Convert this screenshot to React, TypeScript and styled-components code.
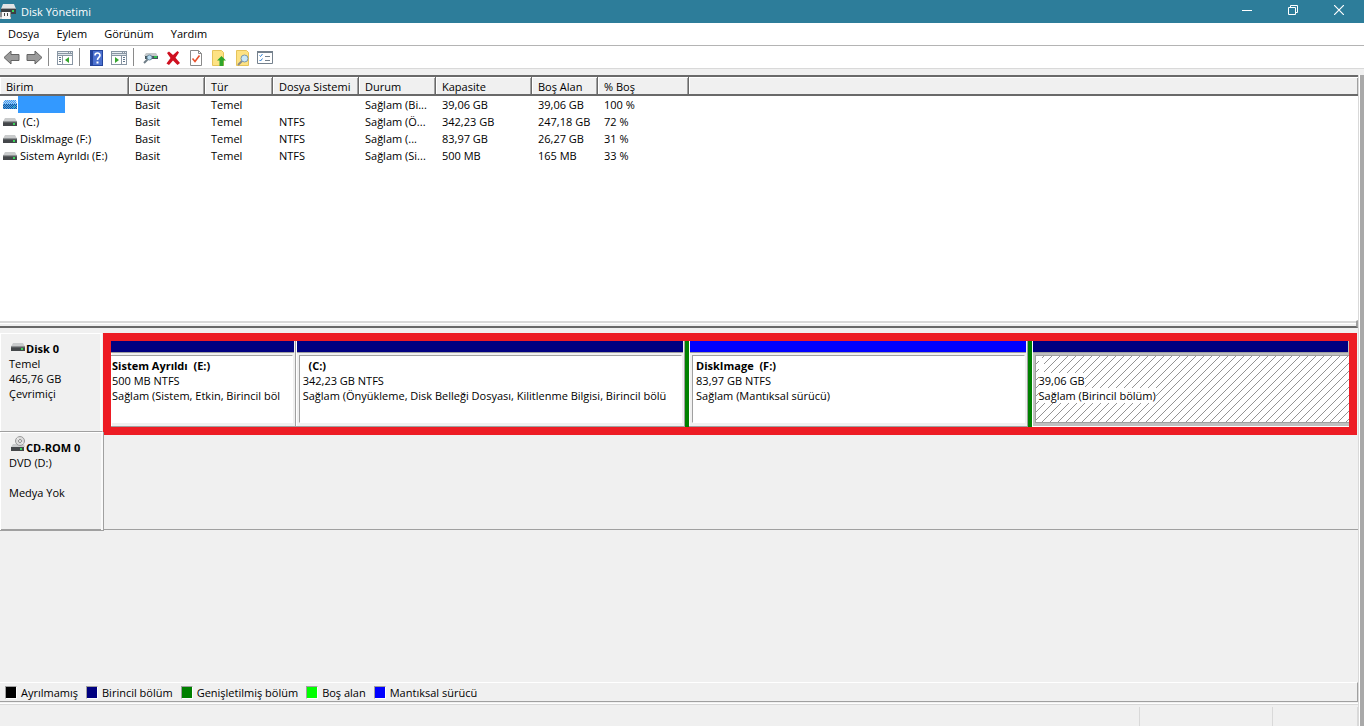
import React from "react";
import styled, { createGlobalStyle, css } from "styled-components";

const face = "#f0f0f0";
const shadow = "#a0a0a0";
const dark = "#696969";
const light = "#d9d9d9";

const colors = {
  unallocated: "#000000",
  primary: "#000080",
  extended: "#008000",
  free: "#00ff00",
  logical: "#0000ff",
};

const GlobalStyle = createGlobalStyle`
  * { box-sizing: border-box; }
  body {
    margin: 0;
    background: ${face};
    color: #000;
    font-family: "Open Sans", "Noto Sans", sans-serif;
    font-size: 11px;
    line-height: 15px;
  }
  button { font: inherit; color: inherit; background: none; border: 0; padding: 0; }
  svg { display: block; flex: none; }
`;

const Window = styled.div`
  display: flex;
  flex-direction: column;
  min-height: 100vh;
`;

const TitleBar = styled.header`
  display: flex;
  align-items: center;
  height: 23px;
  padding-right: 2px;
  background: #2d7d9a;
  color: #fff;
`;

const Title = styled.h1`
  flex: 1;
  margin: 0 0 0 5px;
  font-size: 11px;
  font-weight: 400;
`;

const CaptionButton = styled.button`
  display: flex;
  justify-content: center;
  align-items: center;
  width: 46px;
  height: 20px;
  align-self: flex-start;
`;

const MenuBar = styled.nav`
  display: flex;
  height: 23px;
  background: #fff;
  border-bottom: 1px solid #b4b4b4;
`;

const MenuItem = styled.button`
  padding: 0 9px 2px 8px;
`;

const ToolBar = styled.div`
  display: flex;
  align-items: center;
  height: 23px;
  background: #fff;
  border-bottom: 1px solid ${light};
`;

const ToolButton = styled.button`
  display: flex;
  justify-content: center;
  align-items: center;
  width: 23px;
  height: 22px;
  padding: 1px 1px 0 0;
`;

const ToolSeparator = styled.div`
  width: 1px;
  height: 18px;
  margin: 0 5px 0 2px;
  background: #8a8a8a;
`;

const Workspace = styled.div`
  flex: 1;
  display: flex;
  margin-top: 6px;
`;

const Panes = styled.main`
  flex: 1;
  min-width: 0;
  display: flex;
  flex-direction: column;
  border-right: 1px solid ${light};
`;

const EdgeStrip = styled.div`
  width: 5px;
  background: #a9a9a9;
  border-left: 1px solid #fff;
`;

const VolumePane = styled.section`
  height: 245px;
  background: #fff;
  border-top: 2px solid ${dark};
`;

const VolumeTable = styled.table`
  width: 100%;
  table-layout: fixed;
  border-collapse: separate;
  border-spacing: 0;

  th, td {
    padding: 0 6px;
    text-align: left;
    font-weight: 400;
    white-space: nowrap;
  }
  th {
    height: 19px;
    padding-top: 2px;
    background: ${face};
    border-right: 1px solid ${dark};
    border-bottom: 2px solid ${dark};
    box-shadow: inset 1px 1px 0 #fff, inset -1px 0 0 ${shadow};
  }
  th:last-child { border-right: 0; }
  td { height: 17px; line-height: 17px; }
  td:first-child { padding: 0 0 0 3px; }
`;

const Col = styled.col<{ $w?: number }>`
  ${(p) => p.$w && css`width: ${p.$w}px;`}
`;

const VolumeName = styled.div`
  display: flex;
  align-items: center;
  gap: 3px;
  white-space: pre;
`;

const SelectedName = styled.span`
  width: 47px;
  height: 17px;
  margin-left: -2px;
  background: #3399ff;
`;

const Splitter = styled.div`
  height: 8px;
  background: ${face};
  border-top: 1px solid #fff;
  border-right: 2px solid ${shadow};
  border-bottom: 2px solid ${dark};
  box-shadow: inset 0 2px 0 ${light}, inset 0 3px 0 #fff;
`;

const DiskPane = styled.section`
  flex: 1;
  padding-top: 5px;
`;

const DiskRow = styled.div<{ $line?: boolean }>`
  display: flex;
  height: ${(p) => (p.$line ? 98 : 99)}px;
  ${(p) => p.$line && css`border-bottom: 1px solid ${shadow};`}
`;

const DiskInfo = styled.div<{ $edge?: boolean }>`
  width: ${(p) => (p.$edge ? 104 : 103)}px;
  height: 99px;
  padding: 8px 0 0 9px;
  border-bottom: 1px solid ${shadow};
  border-right: 1px solid ${(p) => (p.$edge ? shadow : face)};
  box-shadow: inset 1px 1px 0 #fff, inset -2px 0 0 #fafafa;
`;

const DiskTitle = styled.div`
  display: flex;
  height: 15px;
  padding-left: 2px;
  gap: 1px;
  font-weight: 700;
`;

const TitleIcon = styled.span<{ $raised?: boolean }>`
  margin-top: ${(p) => (p.$raised ? -4 : 2)}px;
`;

const DiskLine = styled.div`
  height: 15px;
`;

const Highlight = styled.div`
  flex: 1;
  min-width: 0;
  display: flex;
  height: 102px;
  margin-right: 1px;
  border: 8px solid #ed1c24;
`;

const PartitionBox = styled.div<{ $grow: number; $selected?: boolean }>`
  flex: ${(p) => p.$grow} 1 0;
  min-width: 0;
  display: flex;
  flex-direction: column;
  background: ${(p) => (p.$selected ? "#c0c0c0" : face)};
  border-right: ${(p) => (p.$selected ? "0" : `1px solid ${shadow}`)};
  border-bottom: 1px solid ${(p) => (p.$selected ? "#fff" : shadow)};
  box-shadow: inset 1px 0 0 #fff;
`;

const PartitionBar = styled.div<{ $color: string; $first?: boolean }>`
  height: 12px;
  margin: 0 1px 0 ${(p) => (p.$first ? 0 : 1)}px;
  background: ${(p) => p.$color};
  border-bottom: 1px solid ${shadow};
`;

const hatch = `url("data:image/svg+xml,%3Csvg xmlns='http://www.w3.org/2000/svg' width='8' height='8' shape-rendering='crispEdges'%3E%3Cpath d='M7 0h1v1h-1zM6 1h1v1h-1zM5 2h1v1h-1zM4 3h1v1h-1zM3 4h1v1h-1zM2 5h1v1h-1zM1 6h1v1h-1zM0 7h1v1h-1z' fill='%23949494'/%3E%3C/svg%3E")`;

const PartitionBody = styled.div<{ $first?: boolean; $selected?: boolean }>`
  flex: 1;
  margin: 2px 2px 3px ${(p) => (p.$first ? 0 : 3)}px;
  padding: 2px 4px 0 ${(p) => (p.$first ? 1 : 3)}px;
  overflow: hidden;
  white-space: pre;
  background: #fff;
  border: 1px solid ${shadow};
  border-right-color: #fff;
  border-bottom-color: #fff;
  ${(p) => p.$first && css`border-left: 0;`}
  ${(p) =>
    p.$selected &&
    css`
      margin-right: 0;
      border-right: 0;
      border-bottom-color: ${shadow};
      background: #fff ${hatch};
    `}
`;

const PartitionLine = styled.div<{ $bold?: boolean }>`
  height: 15px;
  font-weight: ${(p) => (p.$bold ? 700 : 400)};
  > span { display: inline-block; background: #fff; }
`;

const Extended = styled.div`
  flex: 339 1 0;
  min-width: 0;
  display: flex;
  padding: 0 4px;
  background: ${colors.extended};
`;

const Legend = styled.footer`
  display: flex;
  align-items: center;
  gap: 8px;
  height: 20px;
  padding-left: 5px;
  border-top: 1px solid #fff;
  border-right: 1px solid ${shadow};
  border-bottom: 1px solid ${shadow};
`;

const LegendItem = styled.div`
  display: flex;
  align-items: center;
  gap: 4px;
`;

const Swatch = styled.span<{ $color: string }>`
  width: 12px;
  height: 13px;
  background: ${(p) => p.$color};
  border: 1px solid;
  border-color: ${shadow} #fff #fff ${shadow};
`;

const StatusBar = styled.div`
  display: flex;
  height: 23px;
  margin-top: 1px;
  border-top: 1px solid #fff;
  box-shadow: inset 0 1px 0 ${light};
`;

const StatusCell = styled.div<{ $w?: number }>`
  ${(p) => (p.$w ? css`width: ${p.$w}px;` : css`flex: 1;`)}
  margin-top: 3px;
  border-right: 1px solid ${light};
`;

const DriveIcon = () => (
  <svg width="14" height="8" viewBox="0 0 14 8" aria-hidden="true">
    <path d="M2 0h10l2 3.5H0z" fill="#c9cbcc" />
    <path d="M0 3.5h14V8H0z" fill="#44474a" />
    <path d="M0 3.5h14v.8H0z" fill="#8d9092" />
    <path d="M10 5h2v2h-2z" fill="#3ad65a" />
  </svg>
);

const SelectedDriveIcon = () => (
  <svg width="14" height="9" viewBox="0 0 14 9" aria-hidden="true">
    <defs>
      <pattern id="dither" width="2" height="2" patternUnits="userSpaceOnUse">
        <path d="M0 0h1v1H0zM1 1h1v1H1z" fill="#3399ff" shapeRendering="crispEdges" />
      </pattern>
    </defs>
    <path d="M2 0h10l2 4H0z" fill="#b5cfe4" />
    <path d="M0 4h14v5H0z" fill="#2d5b80" />
    <path d="M10 6h2v2h-2z" fill="#28b08c" />
    <path d="M1 0h12l1 4v5H0V4z" fill="url(#dither)" />
  </svg>
);

const OpticalIcon = () => (
  <svg width="14" height="15" viewBox="0 0 14 15" aria-hidden="true">
    <path d="M2 8h11l1 3H0z" fill="#c9cbcc" />
    <circle cx="9" cy="5" r="4.5" fill="#dcdcdc" stroke="#9a9a9a" />
    <path d="M9 5L6 1.500M9 5l3.500 3" stroke="#f8f8f8" />
    <circle cx="9" cy="5" r="1.500" fill="#fff" stroke="#8a8a8a" />
    <path d="M0 11h13v4H0z" fill="#44474a" />
    <path d="M9 12h2v2H9z" fill="#3ad65a" />
  </svg>
);

const AppIcon = () => (
  <svg width="16" height="16" viewBox="0 0 16 16" aria-hidden="true">
    <path d="M3 0h11l2 5H1z" fill="#e2e4e5" />
    <path d="M1 4h15v6H1z" fill="#3c4043" />
    <path d="M1 4h15v1H1z" fill="#9fa3a5" />
    <path d="M12 6h2v2h-2z" fill="#3ad65a" />
    <path d="M0 8h11v7H0z" fill="#8d9092" />
    <path d="M2 8h8v7H2z" fill="#f6f6f6" />
    <path d="M4 9h1v3H4zM7 9h1v3H7z" fill="#444" />
    <path d="M0 13h2v2H0zM10 13h1v2h-1z" fill="#cfd2d4" />
  </svg>
);

const ArrowIcon = ({ back }: { back?: boolean }) => (
  <svg width="17" height="15" viewBox="0 0 17 15" aria-hidden="true">
    <path
      d={back ? "M1 7.500L8 1v3.500h8v6H8V14z" : "M16 7.500L9 1v3.500H1v6h8V14z"}
      fill="#9b9b9b"
      stroke="#636363"
    />
  </svg>
);

const PaneIcon = ({ right }: { right?: boolean }) => (
  <svg width="16" height="14" viewBox="0 0 16 14" shapeRendering="crispEdges" aria-hidden="true">
    <path d="M0 0h16v14H0z" fill="#8996a3" />
    <path d="M1 1h10v1H1zM12 1h1v1h-1zM14 1h1v1h-1z" fill="#e9eef2" />
    <path d="M1 3h14v1H1z" fill="#dfe5ea" />
    {right ? (
      <>
        <path d="M1 5h9v8H1zM11 5h4v8h-4z" fill="#fff" />
        <path d="M12 6h2v1h-2zM12 8h2v1h-2zM12 10h2v1h-2z" fill="#5d7389" />
        <path d="M4 6l4 3-4 3z" fill="#35a52d" shapeRendering="auto" />
      </>
    ) : (
      <>
        <path d="M1 5h4v8H1zM6 5h9v8H6z" fill="#fff" />
        <path d="M2 6h2v1H2zM2 8h2v1H2zM2 10h2v1H2z" fill="#5d7389" />
        <path d="M12 6L8 9l4 3z" fill="#35a52d" shapeRendering="auto" />
      </>
    )}
  </svg>
);

const HelpIcon = () => (
  <svg width="13" height="16" viewBox="0 0 13 16" aria-hidden="true">
    <path d="M0 0h13v16H0z" fill="#24449c" />
    <path d="M3 1h9v14H3z" fill="#4b70cf" />
    <path d="M5 5.500C5 2.300 10 2.300 10 5.300 10 7.500 7.500 7.400 7.500 10" fill="none" stroke="#fff" strokeWidth="1.600" />
    <path d="M6.500 11.500h2v2h-2z" fill="#fff" />
  </svg>
);

const RescanIcon = () => (
  <svg width="15" height="13" viewBox="0 0 15 13" aria-hidden="true">
    <path d="M3 2h10l2 3H1z" fill="#c4c8ca" />
    <path d="M2 5h13v3H2z" fill="#44555c" />
    <path d="M11 5h3v2h-3z" fill="#2fc04e" />
    <path d="M1 12l4-4" stroke="#6f7d86" strokeWidth="2" />
    <circle cx="6.500" cy="6.500" r="2.500" fill="#b6dcf2" stroke="#6c8ba0" />
  </svg>
);

const DeleteIcon = () => (
  <svg width="14" height="14" viewBox="0 0 14 14" aria-hidden="true">
    <path d="M1 2l2-1.500L7 4l4.500-4L13 1.500 9.500 6.800 14 12l-2.500 2L7 9.500 3 14 .5 12.500 4.500 7z" fill="#cf1020" />
  </svg>
);

const CheckPageIcon = () => (
  <svg width="12" height="16" viewBox="0 0 12 16" aria-hidden="true">
    <path d="M.5.5h8l3 3v12H.5z" fill="#fff" stroke="#8a8a8a" />
    <path d="M8.500.5v3h3" fill="none" stroke="#8a8a8a" />
    <path d="M2.500 8.500l2.500 3 4.500-6" fill="none" stroke="#e8502a" strokeWidth="1.600" />
  </svg>
);

const FolderUpIcon = () => (
  <svg width="14" height="16" viewBox="0 0 14 16" aria-hidden="true">
    <path d="M.5.5h9l2 2v13H.5z" fill="#fde283" stroke="#e6c35a" />
    <path d="M9.500 6L14 10.500h-2.500V16h-4v-5.500H5z" fill="#2fa52b" />
  </svg>
);

const FolderSearchIcon = () => (
  <svg width="15" height="16" viewBox="0 0 15 16" aria-hidden="true">
    <path d="M1.500.5h10l2 2v13h-12z" fill="#fde283" stroke="#e6c35a" />
    <path d="M3 15l5-5" stroke="#8a8a8a" strokeWidth="2" />
    <circle cx="9.500" cy="8.500" r="3.500" fill="#c9e8f8" stroke="#7d97a8" />
  </svg>
);

const ChecklistIcon = () => (
  <svg width="16" height="13" viewBox="0 0 16 13" aria-hidden="true">
    <path d="M.5.5h15v12H.5z" fill="#fff" stroke="#75818d" />
    <path d="M0 0h16v2H0z" fill="#75818d" />
    <path d="M2.500 4.500l1 1 2-2.500M2.500 9l1 1 2-2.500" fill="none" stroke="#2d7fd3" />
    <path d="M8 5.500h5M8 9.500h5" stroke="#75818d" />
  </svg>
);

const tools: Array<[string, React.ReactNode] | null> = [
  ["Geri", <ArrowIcon back />],
  ["İleri", <ArrowIcon />],
  null,
  ["Konsol ağacı", <PaneIcon />],
  null,
  ["Yardım", <HelpIcon />],
  ["Eylem bölmesi", <PaneIcon right />],
  null,
  ["Yeniden tara", <RescanIcon />],
  ["Sil", <DeleteIcon />],
  ["Özellikler", <CheckPageIcon />],
  ["Yukarı", <FolderUpIcon />],
  ["Bul", <FolderSearchIcon />],
  ["Ayarlar", <ChecklistIcon />],
];

const headers = ["Birim", "Düzen", "Tür", "Dosya Sistemi", "Durum", "Kapasite", "Boş Alan", "% Boş", ""];
const widths = [129, 76, 68, 86, 77, 96, 66, 91];

const volumes = [
  { name: "", cells: ["Basit", "Temel", "", "Sağlam (Bi...", "39,06 GB", "39,06 GB", "100 %"] },
  { name: " (C:)", cells: ["Basit", "Temel", "NTFS", "Sağlam (Ö...", "342,23 GB", "247,18 GB", "72 %"] },
  { name: "DiskImage (F:)", cells: ["Basit", "Temel", "NTFS", "Sağlam (...", "83,97 GB", "26,27 GB", "31 %"] },
  { name: "Sistem Ayrıldı (E:)", cells: ["Basit", "Temel", "NTFS", "Sağlam (Si...", "500 MB", "165 MB", "33 %"] },
];

const legend: Array<[string, string]> = [
  ["Ayrılmamış", colors.unallocated],
  ["Birincil bölüm", colors.primary],
  ["Genişletilmiş bölüm", colors.extended],
  ["Boş alan", colors.free],
  ["Mantıksal sürücü", colors.logical],
];

interface PartitionProps {
  name: string;
  size: string;
  status: string;
  color: string;
  grow: number;
  first?: boolean;
  selected?: boolean;
}

const Partition = ({ name, size, status, color, grow, first, selected }: PartitionProps) => (
  <PartitionBox $grow={grow} $selected={selected}>
    <PartitionBar $color={color} $first={first} />
    <PartitionBody $first={first} $selected={selected}>
      <PartitionLine $bold><span>{name}</span></PartitionLine>
      <PartitionLine><span>{size}</span></PartitionLine>
      <PartitionLine><span>{status}</span></PartitionLine>
    </PartitionBody>
  </PartitionBox>
);

export default function App() {
  return (
    <Window>
      <GlobalStyle />
      <TitleBar>
        <AppIcon />
        <Title>Disk Yönetimi</Title>
        <CaptionButton aria-label="Simge durumuna küçült">
          <svg width="10" height="10" viewBox="0 0 10 10"><path d="M0 5.500h10" stroke="#fff" /></svg>
        </CaptionButton>
        <CaptionButton aria-label="Önceki boyut">
          <svg width="10" height="10" viewBox="0 0 10 10" fill="none" stroke="#fff">
            <path d="M.5 2.500h7v7h-7zM2.500 2.500v-2h7v7h-2" />
          </svg>
        </CaptionButton>
        <CaptionButton aria-label="Kapat">
          <svg width="10" height="10" viewBox="0 0 10 10"><path d="M0 0l10 10M10 0L0 10" stroke="#fff" strokeWidth="1.200" /></svg>
        </CaptionButton>
      </TitleBar>
      <MenuBar>
        {["Dosya", "Eylem", "Görünüm", "Yardım"].map((m) => <MenuItem key={m}>{m}</MenuItem>)}
      </MenuBar>
      <ToolBar role="toolbar">
        {tools.map((t, i) =>
          t ? <ToolButton key={i} aria-label={t[0]}>{t[1]}</ToolButton> : <ToolSeparator key={i} />
        )}
      </ToolBar>
      <Workspace>
        <Panes>
          <VolumePane>
            <VolumeTable>
              <colgroup>
                {widths.map((w, i) => <Col key={i} $w={w} />)}
                <Col />
              </colgroup>
              <thead>
                <tr>{headers.map((h, i) => <th key={i}>{h}</th>)}</tr>
              </thead>
              <tbody>
                {volumes.map((v) => (
                  <tr key={v.name}>
                    <td>
                      <VolumeName>
                        {v.name ? <DriveIcon /> : <SelectedDriveIcon />}
                        {v.name ? <span>{v.name}</span> : <SelectedName />}
                      </VolumeName>
                    </td>
                    {v.cells.map((c, i) => <td key={i}>{c}</td>)}
                    <td />
                  </tr>
                ))}
              </tbody>
            </VolumeTable>
          </VolumePane>
          <Splitter />
          <DiskPane>
            <DiskRow>
              <DiskInfo>
                <DiskTitle><TitleIcon><DriveIcon /></TitleIcon><span>Disk 0</span></DiskTitle>
                <DiskLine>Temel</DiskLine>
                <DiskLine>465,76 GB</DiskLine>
                <DiskLine>Çevrimiçi</DiskLine>
              </DiskInfo>
              <Highlight>
                <Partition first name="Sistem Ayrıldı  (E:)" size="500 MB NTFS" status="Sağlam (Sistem, Etkin, Birincil böl" color={colors.primary} grow={184} />
                <Partition name="  (C:)" size="342,23 GB NTFS" status="Sağlam (Önyükleme, Disk Belleği Dosyası, Kilitlenme Bilgisi, Birincil bölü" color={colors.primary} grow={389} />
                <Extended>
                  <Partition name="DiskImage  (F:)" size="83,97 GB NTFS" status="Sağlam (Mantıksal sürücü)" color={colors.logical} grow={1} />
                </Extended>
                <Partition selected name="  " size="39,06 GB" status="Sağlam (Birincil bölüm)" color={colors.primary} grow={318} />
              </Highlight>
            </DiskRow>
            <DiskRow $line>
              <DiskInfo $edge>
                <DiskTitle><TitleIcon $raised><OpticalIcon /></TitleIcon><span>CD-ROM 0</span></DiskTitle>
                <DiskLine>DVD (D:)</DiskLine>
                <DiskLine />
                <DiskLine>Medya Yok</DiskLine>
              </DiskInfo>
            </DiskRow>
          </DiskPane>
          <Legend>
            {legend.map(([label, color]) => (
              <LegendItem key={label}><Swatch $color={color} />{label}</LegendItem>
            ))}
          </Legend>
          <StatusBar>
            <StatusCell />
            <StatusCell $w={133} />
            <StatusCell $w={85} />
          </StatusBar>
        </Panes>
        <EdgeStrip />
      </Workspace>
    </Window>
  );
}
